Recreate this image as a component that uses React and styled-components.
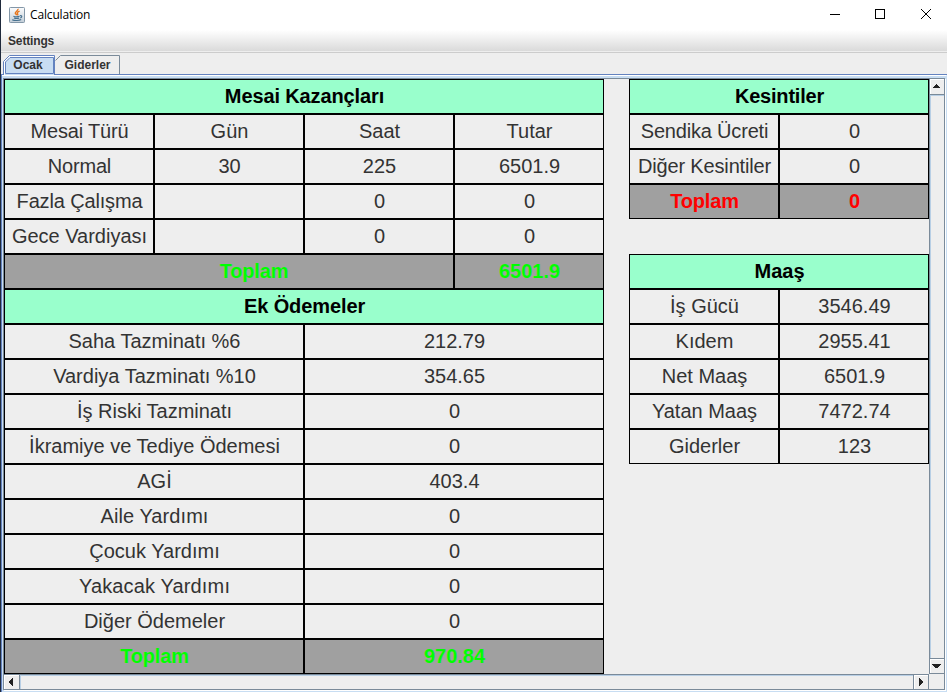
import React from "react";
import styled, { createGlobalStyle } from "styled-components";

const Global = createGlobalStyle`
  * { box-sizing: border-box; }
  body { margin: 0; overflow: hidden; background: #eee; }
`;

const Window = styled.div`
  width: 947px;
  height: 692px;
  display: flex;
  flex-direction: column;
  border-left: 1px solid #1f2a3c;
  background: #eee;
  color: #333;
  font-family: "Liberation Sans", Arial, sans-serif;
`;
const TitleBar = styled.header`
  height: 30px;
  flex: none;
  display: flex;
  align-items: center;
  padding-left: 8px;
  background: #fff;
`;
const Title = styled.h1`
  margin: 0 auto 0 5px;
  font: 400 12px/30px "Open Sans", "Segoe UI", sans-serif;
  letter-spacing: -0.15px;
  color: #000;
`;
const WindowButton = styled.button`
  width: 46px;
  height: 30px;
  padding: 0;
  border: 0;
  background: none;
  svg { display: block; }
`;
const MenuBar = styled.nav`
  height: 22px;
  flex: none;
  padding-left: 7px;
  background: linear-gradient(#fff, #dadada 21px, #eee 21px);
  font: 700 12px/22px "Liberation Sans", Arial, sans-serif;
  letter-spacing: -0.15px;
`;
const Tabs = styled.div`
  height: 22px;
  flex: none;
  display: flex;
  align-items: flex-end;
  padding-left: 2px;
  border-top: 1px solid #ccc;
`;
const Tab = styled.div`
  position: relative;
  width: ${(p) => p.$w}px;
  height: 19px;
  padding-right: ${(p) => p.$inset || 0}px;
  text-align: center;
  font: 700 12px/20px "Liberation Sans", Arial, sans-serif;
  svg { position: absolute; left: 0; top: 0; overflow: visible; }
  span { position: relative; }
`;
const Pane = styled.main`
  height: 618px;
  flex: none;
  border-top: 1px solid #6382bf;
  border-left: 1px solid #6382bf;
  display: flex;
`;
const PaneInset = styled.div`
  width: 945px;
  border-top: 1px solid #fff;
  border-right: 1px solid #c8ddf2;
  border-bottom: 1px solid #c8ddf2;
  padding: 2px 0 0 1px;
  background: #c8ddf2;
`;
const ScrollPane = styled.div`
  width: 942px;
  height: 612px;
  display: grid;
  grid-template-columns: 925px 15px;
  grid-template-rows: 595px 15px;
  padding-left: 1px;
  border: 1px solid #7a8a99;
  border-left: 0;
  background: #7a8a99;
  box-shadow: 1px 1px 0 #fff;
`;
const Viewport = styled.div`
  display: flex;
  gap: 25px;
  background: #eee;
`;
const Column = styled.div`
  width: ${(p) => p.$w}px;
  flex: none;
`;
const Row = styled.div`
  display: grid;
  grid-template-columns: repeat(${(p) => p.$cols}, 1fr);
  height: 35px;
`;
const tones = {
  head: { bg: "#99ffcc", fg: "#000" },
  gain: { bg: "#a0a0a0", fg: "#00ff00" },
  loss: { bg: "#a0a0a0", fg: "#ff0000" },
};
const Cell = styled.div`
  grid-column: span ${(p) => p.$span};
  min-width: 0;
  padding-left: ${(p) => (p.$span === 3 ? 50 : 1)}px;
  border: 1px solid #000;
  background: ${(p) => tones[p.$tone]?.bg || "#eee"};
  color: ${(p) => tones[p.$tone]?.fg || "#333"};
  font-size: 20px;
  font-weight: ${(p) => (p.$tone ? 700 : 400)};
  line-height: 33px;
  letter-spacing: ${(p) => p.$track || 0}px;
  text-align: center;
  white-space: nowrap;
`;
const Spacer = styled.div`
  height: 35px;
`;
const VBar = styled.div`
  display: flex;
  flex-direction: column;
  padding: 0 0 1px 1px;
`;
const HBar = styled.div`
  display: flex;
  padding: 1px 1px 0 0;
  height: 15px;
`;
const VTrack = styled.div`
  flex: 1;
  background: #eee;
  border: solid #b8cfe5;
  border-width: 1px 0 0 1px;
  margin: 1px 0;
`;
const HTrack = styled.div`
  flex: 1;
  background: #eee;
  border: solid #b8cfe5;
  border-width: 1px 0 0 1px;
  margin: 0 1px;
`;
const Arrow = styled.div`
  width: ${(p) => p.$w}px;
  height: ${(p) => p.$h}px;
  flex: none;
  background: #eee;
  border: solid #fff;
  border-width: 1px 0 0 1px;
  svg { display: block; }
`;
const Corner = styled.div`
  background: #eee;
`;

const earnings = [
  [["Mesai Kazançları", 4]],
  [["Mesai Türü", 1], ["Gün", 1], ["Saat", 1], ["Tutar", 1]],
  [["Normal", 1], ["30", 1], ["225", 1], ["6501.9", 1]],
  [["Fazla Çalışma", 1], ["", 1], ["0", 1], ["0", 1]],
  [["Gece Vardiyası", 1], ["", 1], ["0", 1], ["0", 1]],
  [["Toplam", 3], ["6501.9", 1]],
];
const simple = (rows) => rows.map((r) => r.map((t) => [t, 1]));
const extras = simple([
  ["Ek Ödemeler"],
  ["Saha Tazminatı %6", "212.79"],
  ["Vardiya Tazminatı %10", "354.65"],
  ["İş Riski Tazminatı", "0"],
  ["İkramiye ve Tediye Ödemesi", "0"],
  ["AGİ", "403.4"],
  ["Aile Yardımı", "0"],
  ["Çocuk Yardımı", "0"],
  ["Yakacak Yardımı", "0"],
  ["Diğer Ödemeler", "0"],
  ["Toplam", "970.84"],
]);
const deductions = simple([
  ["Kesintiler"],
  ["Sendika Ücreti", "0"],
  ["Diğer Kesintiler", "0"],
  ["Toplam", "0"],
]);
const salary = simple([
  ["Maaş"],
  ["İş Gücü", "3546.49"],
  ["Kıdem", "2955.41"],
  ["Net Maaş", "6501.9"],
  ["Yatan Maaş", "7472.74"],
  ["Giderler", "123"],
]);

const tracking = {
  "Mesai Kazançları": -0.12,
  "Ek Ödemeler": -0.1,
  "Mesai Türü": -0.15,
  Normal: -0.2,
  "Fazla Çalışma": -0.15,
  "Sendika Ücreti": -0.18,
  "Diğer Kesintiler": -0.15,
  Kesintiler: -0.2,
  "Aile Yardımı": 0.08,
  "Yakacak Yardımı": 0.15,
  Toplam: -0.2,
};

const Table = ({ rows, total }) =>
  rows.map((row, i) => (
    <Row key={i} $cols={row.reduce((sum, [, span]) => sum + span, 0)}>
      {row.map(([text, span], j) => (
        <Cell
          key={j}
          $span={span}
          $track={tracking[text]}
          $tone={i === 0 ? "head" : row[0][0] === "Toplam" ? total : undefined}
        >
          {text}
        </Cell>
      ))}
    </Row>
  ));

const JavaIcon = () => (
  <svg width="16" height="16" viewBox="0 0 16 16">
    <defs>
      <linearGradient id="tile" x1="0" y1="0" x2="0" y2="1">
        <stop offset="0" stopColor="#fbfcfd" />
        <stop offset="1" stopColor="#c3ced8" />
      </linearGradient>
    </defs>
    <rect x="0.5" y="0.5" width="15" height="15" rx="0.8" fill="url(#tile)" stroke="#8397a8" />
    <path d="M9 1.8C9.6 3.6 6 4.6 6.3 6.1C6.4 6.9 7.5 7.3 7.6 8.2M10.6 4.2C8.4 5.1 7.8 5.8 8.6 6.8C9 7.3 8.9 7.7 8.4 8.2" fill="none" stroke="#e8761c" strokeWidth="1.4" />
    <path d="M4.4 9.2C6 9.9 9 9.8 10.6 9.3M5 11C6.5 11.6 9 11.5 10.2 11M10.9 8.8C13.5 8.1 13.2 10.5 11.2 11M3.2 12.7C5.5 13.9 10.5 13.7 12.2 12.6" fill="none" stroke="#47718f" strokeWidth="1.15" />
  </svg>
);

export default function App() {
  return (
    <>
      <Global />
      <Window>
        <TitleBar>
          <JavaIcon />
          <Title>Calculation</Title>
          <WindowButton aria-label="Minimize">
            <svg width="46" height="30"><path d="M21 14.5h10" stroke="#000" /></svg>
          </WindowButton>
          <WindowButton aria-label="Maximize">
            <svg width="46" height="30"><rect x="20.5" y="9.5" width="9" height="9" fill="none" stroke="#000" /></svg>
          </WindowButton>
          <WindowButton aria-label="Close">
            <svg width="46" height="30"><path d="M20 9l10 10M30 9l-10 10" stroke="#000" /></svg>
          </WindowButton>
        </TitleBar>
        <MenuBar>Settings</MenuBar>
        <Tabs>
          <Tab $w={52} $inset={2}>
            <svg width="52" height="20">
              <path d="M0.5 20V6.5L6.5 0.5H51.5V20" fill="#fff" stroke="#6382bf" />
              <path d="M2.5 18.5V7L7 2.5H50.5V18.5Z" fill="#c8ddf2" stroke="#6382bf" />
              <path d="M2 19h49v1h-49z" fill="#c8ddf2" />
            </svg>
            <span>Ocak</span>
          </Tab>
          <Tab $w={65}>
            <svg width="65" height="19">
              <path d="M0.5 5.5L5.5 0.5H64.5V19" fill="none" stroke="#7a8a99" />
            </svg>
            <span>Giderler</span>
          </Tab>
        </Tabs>
        <Pane>
          <PaneInset>
            <ScrollPane>
              <Viewport>
                <Column $w={600}>
                  <Table rows={earnings} total="gain" />
                  <Table rows={extras} total="gain" />
                </Column>
                <Column $w={300}>
                  <Table rows={deductions} total="loss" />
                  <Spacer />
                  <Table rows={salary} />
                </Column>
              </Viewport>
              <VBar>
                <Arrow $w={14} $h={15}>
                  <svg width="13" height="14"><path d="M5 4h1v1h1v1h1v1h1v1H2V7h1V6h1V5h1z" fill="#222" /></svg>
                </Arrow>
                <VTrack />
                <Arrow $w={14} $h={14}>
                  <svg width="13" height="13"><path d="M1 4h9v1H9v1H8v1H7v1H4V7H3V6H2V5H1z" fill="#222" /></svg>
                </Arrow>
              </VBar>
              <HBar>
                <Arrow $w={15} $h={14}>
                  <svg width="14" height="13"><path d="M8 2v8H7V9H6V8H5V7H4V5h1V4h1V3h1V2z" fill="#222" /></svg>
                </Arrow>
                <HTrack />
                <Arrow $w={14} $h={14}>
                  <svg width="13" height="13"><path d="M4 2h1v1h1v1h1v1h1v2H7v1H6v1H5v1H4z" fill="#222" /></svg>
                </Arrow>
              </HBar>
              <Corner />
            </ScrollPane>
          </PaneInset>
        </Pane>
      </Window>
    </>
  );
}
